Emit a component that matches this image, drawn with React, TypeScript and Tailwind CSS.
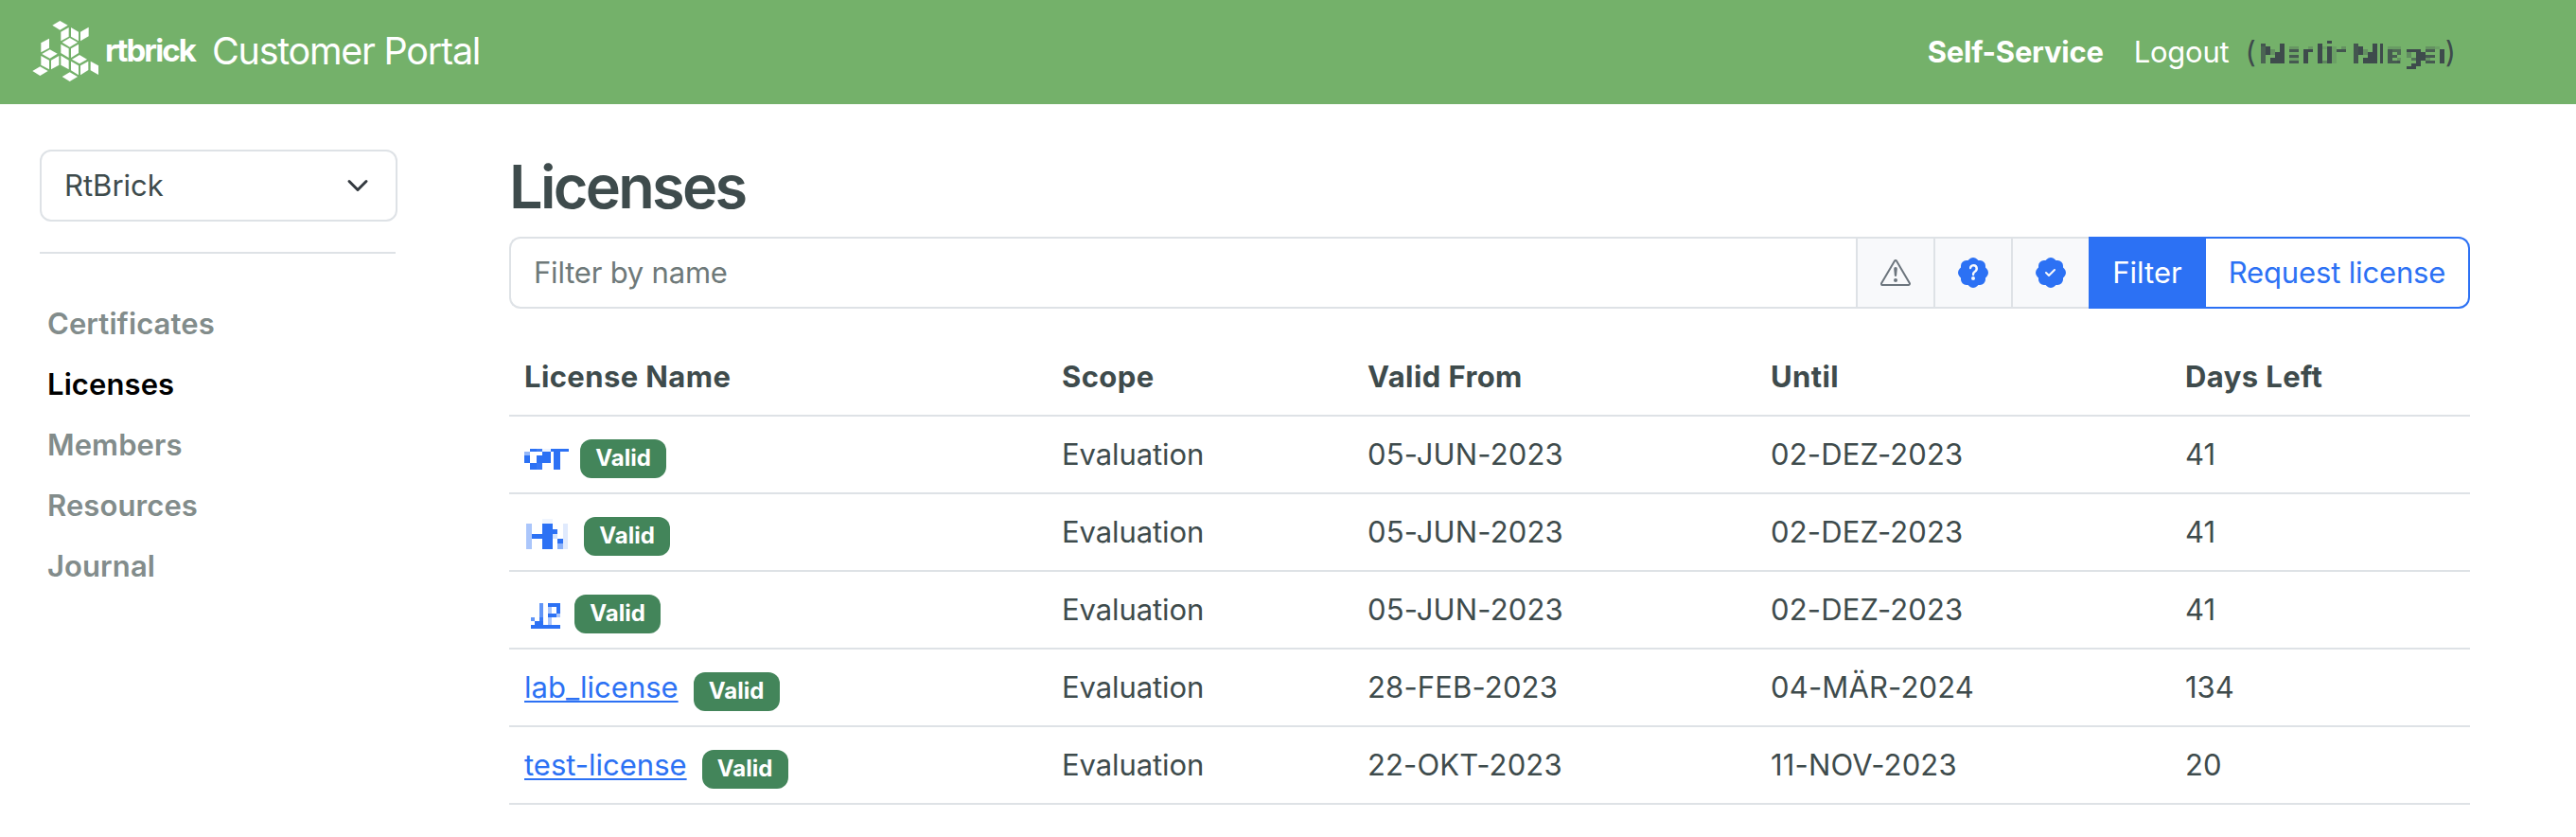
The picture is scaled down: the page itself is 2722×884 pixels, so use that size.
import { useState } from 'react';
import { BsExclamationTriangle, BsPatchCheckFill, BsPatchQuestionFill } from 'react-icons/bs';
import clsx from 'clsx';

type Block = [x: number, y: number, w: number, h: number, opacity?: number];

interface License {
  name: string;
  masked?: { width: number; gap: string; blocks: Block[] };
  scope: string;
  from: string;
  until: string;
  daysLeft: number;
}

const navItems = ['Certificates', 'Licenses', 'Members', 'Resources', 'Journal'];

const logoTiles = [
  '106,80 130,66 155,80 130,95',
  '133,101 158,87 158,116 133,130',
  '165,87 189,101 189,130 165,116',
  '195,101 221,86 221,115 195,130',
  '137,134 161,120 186,134 161,149',
  '133,140 158,154 158,183 133,168',
  '165,154 189,140 189,168 165,183',
  '70,136 96,122 96,152 70,166',
  '73,171 98,157 122,170 98,185',
  '70,177 96,191 96,220 70,206',
  '102,191 127,177 127,206 102,220',
  '133,176 158,191 158,220 133,206',
  '168,188 192,174 216,188 192,202',
  '165,194 189,208 189,238 165,223',
  '195,208 220,194 220,222 195,238',
  '227,194 252,208 252,237 227,223',
  '43,225 67,211 92,225 67,240',
  '137,243 161,229 186,243 161,258',
];

// Block coordinates are in thirds of a pixel
const userBlocks: Block[] = [
  [15, 9, 15, 63, 0.75], [15, 9, 15, 9, 0.6], [30, 18, 15, 27], [45, 27, 15, 18, 0.3], [45, 54, 15, 18],
  [60, 36, 15, 36], [75, 9, 15, 63],
  [105, 18, 30, 9, 0.25], [105, 27, 30, 9, 0.85], [105, 45, 30, 9, 0.85], [105, 36, 30, 9, 0.1], [105, 54, 30, 9, 0.2], [105, 63, 30, 9, 0.85],
  [150, 27, 15, 45], [165, 27, 15, 9], [165, 18, 15, 9, 0.25],
  [195, 9, 15, 63], [210, 18, 15, 9, 0.15], [210, 63, 15, 9, 0.4],
  [225, 0, 15, 9], [225, 18, 15, 54], [240, 18, 15, 54, 0.15],
  [255, 27, 30, 9, 0.9], [270, 18, 15, 9, 0.3],
  [309, 9, 15, 63, 0.9], [324, 18, 15, 27], [339, 27, 15, 18, 0.3], [339, 54, 15, 18],
  [354, 36, 15, 36], [369, 9, 15, 63], [393, 9, 9, 63],
  [417, 27, 15, 45, 0.85], [432, 27, 15, 9, 0.7], [432, 45, 15, 9, 0.8], [447, 27, 12, 18, 0.7], [432, 63, 24, 9, 0.85],
  [417, 18, 42, 9, 0.2], [447, 54, 12, 18, 0.3],
  [477, 27, 30, 9], [477, 36, 15, 18, 0.35], [492, 54, 30, 9, 0.6], [507, 27, 15, 54], [492, 72, 30, 9], [477, 81, 30, 9],
  [522, 36, 15, 27], [537, 27, 30, 9, 0.8], [537, 18, 30, 9, 0.3], [537, 45, 30, 9, 0.85], [537, 63, 30, 9, 0.85], [537, 54, 15, 9, 0.3],
  [582, 27, 15, 45], [567, 18, 15, 9, 0.15],
];

const licenses: License[] = [
  {
    name: 'hidden-1',
    masked: {
      width: 59,
      gap: 'mt-[18px]',
      blocks: [
        [0, 9, 18, 12, 0.5], [0, 21, 18, 24], [18, 0, 21, 9], [39, 0, 18, 9, 0.92], [57, 0, 27, 9, 0.08], [84, 0, 57, 9],
        [57, 9, 27, 36], [39, 21, 18, 24], [18, 45, 21, 21], [39, 45, 18, 21, 0.95], [93, 9, 21, 57],
      ],
    },
    scope: 'Evaluation', from: '05-JUN-2023', until: '02-DEZ-2023', daysLeft: 41,
  },
  {
    name: 'hidden-2',
    masked: {
      width: 63,
      gap: 'mt-[10px]',
      blocks: [
        [6, 15, 18, 81, 0.4], [24, 48, 33, 15], [57, 0, 33, 15, 0.07], [57, 15, 33, 81], [90, 33, 15, 15],
        [90, 48, 15, 15, 0.2], [105, 63, 18, 15], [105, 78, 18, 18, 0.55], [123, 15, 15, 81, 0.15],
      ],
    },
    scope: 'Evaluation', from: '05-JUN-2023', until: '02-DEZ-2023', daysLeft: 41,
  },
  {
    name: 'hidden-3',
    masked: {
      width: 53,
      gap: 'mt-[17px]',
      blocks: [
        [48, 0, 12, 45, 0.75], [48, 45, 12, 12, 0.95], [21, 45, 12, 12, 0.75], [33, 57, 27, 12], [21, 69, 93, 12],
        [75, 0, 39, 12], [75, 12, 12, 57, 0.4], [102, 12, 12, 21], [75, 33, 27, 12], [102, 33, 12, 12, 0.4],
      ],
    },
    scope: 'Evaluation', from: '05-JUN-2023', until: '02-DEZ-2023', daysLeft: 41,
  },
  { name: 'lab_license', scope: 'Evaluation', from: '28-FEB-2023', until: '04-MÄR-2024', daysLeft: 134 },
  { name: 'test-license', scope: 'Evaluation', from: '22-OKT-2023', until: '11-NOV-2023', daysLeft: 20 },
];

const Blocks = ({ blocks, width, height, className }: { blocks: Block[]; width: number; height: number; className?: string }) => (
  <svg
    width={width}
    height={height}
    viewBox={`0 0 ${width * 3} ${height * 3}`}
    shapeRendering="crispEdges"
    fill="currentColor"
    className={clsx('flex-none', className)}
  >
    {blocks.map(([x, y, w, h, opacity = 1], i) => (
      <rect key={i} x={x} y={y} width={w} height={h} opacity={opacity} />
    ))}
  </svg>
);

const Header = () => (
  <header className="flex h-[110px] items-start bg-[#74b16a] pl-[34px] pr-[127px] text-white">
    <svg width="70" height="64" viewBox="42 66 210 192" fill="currentColor" className="mt-[22px] flex-none">
      {logoTiles.map((points) => <polygon key={points} points={points} />)}
    </svg>
    <span className="ml-[7px] mt-[29px] text-[33px] leading-[48px] font-bold tracking-[-1.9px]">rtbrick</span>
    <span className="ml-[18px] mt-[24px] text-[39.5px] leading-[60px] tracking-[-1.25px]">Customer Portal</span>

    <nav className="ml-auto mt-[31px] flex leading-[48px]">
      <a href="#" className="font-bold tracking-[-0.25px]">Self-Service</a>
      <a href="#" className="ml-[32px] tracking-[-0.25px]">Logout</a>
      <span className="ml-[17px] flex text-[#3e4b4c]">
        (<Blocks blocks={userBlocks} width={200} height={30} className="mt-[12px]" />)
      </span>
    </nav>
  </header>
);

const Sidebar = () => (
  <aside className="w-[378px] flex-none">
    <button className="flex h-[76px] w-full items-center justify-between rounded-xl border-2 border-[#dee2e6] bg-white pl-[24px] pr-[28px]">
      RtBrick
      <svg width="24" height="24" viewBox="0 0 16 16" fill="none" stroke="#343a40" strokeWidth="2" strokeLinecap="round" strokeLinejoin="round">
        <path d="m2 5 6 6 6-6" />
      </svg>
    </button>
    <hr className="mt-8 mr-[2px] border-t-2 border-[#dee2e6]" />
    <nav className="mt-[42px] flex flex-col pl-2 font-semibold tracking-[0.1px]">
      {navItems.map((item) => (
        <a key={item} href="#" className={clsx('py-2 leading-[48px]', item === 'Licenses' ? 'text-black' : 'text-[#828c8b]')}>
          {item}
        </a>
      ))}
    </nav>
  </aside>
);

const FilterBar = () => {
  const [query, setQuery] = useState('');
  const toggle = 'flex w-[82px] items-center justify-center border-y-2 border-l-2 border-[#dee2e6] bg-[#f8f9fb]';

  return (
    <div className="flex h-[76px]">
      <input
        value={query}
        onChange={(e) => setQuery(e.target.value)}
        placeholder="Filter by name"
        className="min-w-0 flex-1 rounded-l-xl border-y-2 border-l-2 border-[#dee2e6] px-6 tracking-[-0.2px] outline-none placeholder:text-[#6e7979]"
      />
      <button className={clsx(toggle, 'text-[#6c757d]')}><BsExclamationTriangle size={32} /></button>
      <button className={clsx(toggle, 'text-[#2c71f4]')}><BsPatchQuestionFill size={32} /></button>
      <button className={clsx(toggle, 'text-[#2c71f4]')}><BsPatchCheckFill size={32} /></button>
      <button className="w-[124px] bg-[#2c71f4] text-white">Filter</button>
      <button className="w-[279px] rounded-r-xl border-y-2 border-r-2 border-[#2c71f4] tracking-[-0.15px] text-[#2c71f4]">
        Request license
      </button>
    </div>
  );
};

const LicenseTable = () => {
  const cell = 'h-[82px] border-b-2 border-[#dee2e6] px-4 py-0';

  return (
    <table className="mt-8 w-full table-fixed border-separate border-spacing-0 text-left">
      <colgroup>
        <col className="w-[568px]" />
        <col className="w-[323px]" />
        <col className="w-[426px]" />
        <col className="w-[438px]" />
        <col />
      </colgroup>
      <thead>
        <tr className="tracking-[0.4px]">
          {['License Name', 'Scope', 'Valid From', 'Until', 'Days Left'].map((title) => (
            <th key={title} className={clsx(cell, 'font-bold')}>{title}</th>
          ))}
        </tr>
      </thead>
      <tbody>
        {licenses.map((license) => (
          <tr key={license.name}>
            <td className={cell}>
              <div className="flex h-[48px] items-start">
                {license.masked ? (
                  <a href="#" className="flex text-[#2c71f4]">
                    <Blocks blocks={license.masked.blocks} width={license.masked.width} height={32} className={license.masked.gap} />
                  </a>
                ) : (
                  <a href="#" className="mr-[16px] text-[#2c71f4] underline decoration-2 underline-offset-[3px]">{license.name}</a>
                )}
                <span className="mt-2 h-[41px] w-[91px] rounded-xl bg-[#43855a] pt-2 text-center text-2xl leading-6 font-bold text-white">
                  Valid
                </span>
              </div>
            </td>
            <td className={clsx(cell, 'tracking-[-0.1px]')}>{license.scope}</td>
            <td className={clsx(cell, 'tracking-[0.15px]')}>{license.from}</td>
            <td className={clsx(cell, 'tracking-[0.15px]')}>{license.until}</td>
            <td className={cell}>{license.daysLeft}</td>
          </tr>
        ))}
      </tbody>
    </table>
  );
};

export default function App() {
  return (
    <div className="min-h-[884px] bg-white font-['Inter',sans-serif] text-[31px] leading-[48px] text-[#3e4b4c]">
      <Header />
      <div className="flex pl-[42px] pt-12">
        <Sidebar />
        <main className="ml-[118px] w-[2072px]">
          <h1 className="h-[92px] pt-px text-[63px] leading-[76px] font-semibold tracking-[-2.7px]">Licenses</h1>
          <FilterBar />
          <LicenseTable />
        </main>
      </div>
    </div>
  );
}
